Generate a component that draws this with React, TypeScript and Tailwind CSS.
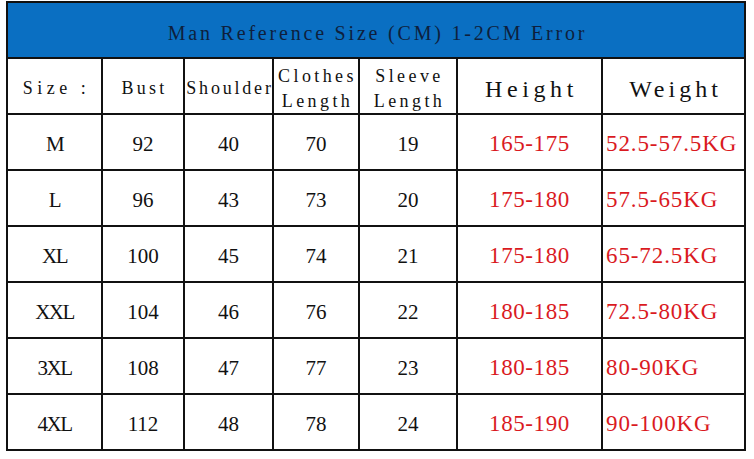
const rows = [
  { size: "M", bust: "92", shoulder: "40", length: "70", sleeve: "19", height: "165-175", weight: "52.5-57.5KG" },
  { size: "L", bust: "96", shoulder: "43", length: "73", sleeve: "20", height: "175-180", weight: "57.5-65KG" },
  { size: "XL", bust: "100", shoulder: "45", length: "74", sleeve: "21", height: "175-180", weight: "65-72.5KG" },
  { size: "XXL", bust: "104", shoulder: "46", length: "76", sleeve: "22", height: "180-185", weight: "72.5-80KG" },
  { size: "3XL", bust: "108", shoulder: "47", length: "77", sleeve: "23", height: "180-185", weight: "80-90KG" },
  { size: "4XL", bust: "112", shoulder: "48", length: "78", sleeve: "24", height: "185-190", weight: "90-100KG" },
]

const head = "flex items-center justify-center bg-white pt-[5px] text-[18px]"

const App = () => {
  return (
    <div className="w-[754px] h-[459px] bg-white pt-[1px] pl-[6px] [font-family:'Liberation_Serif',serif]">
      <div className="grid w-[740px] grid-cols-[93px_80px_87px_84px_96px_143px_141px] auto-rows-[54px] gap-[2px] bg-[#111] p-[2px] text-[#111]">
        {/* Title band */}
        <div className="col-span-7 flex items-center justify-center bg-[#0a6fc2] pt-[5px] pl-[3px] text-[20px] tracking-[2.8px] text-[#0e1f3d]">
          Man Reference Size (CM) 1-2CM Error
        </div>

        {/* Header row */}
        <div className={`${head} tracking-[4.5px] pl-[4px]`}>Size :</div>
        <div className={`${head} tracking-[3.3px] pl-[3px]`}>Bust</div>
        <div className={`${head} tracking-[2.8px] pl-[3px]`}>Shoulder</div>
        <div className={`${head} flex-col tracking-[3.4px] pl-[3px] leading-[25px]`}>
          <span>Clothes</span>
          <span>Length</span>
        </div>
        <div className={`${head} flex-col tracking-[3.4px] pl-[3px] leading-[25px]`}>
          <span>Sleeve</span>
          <span>Length</span>
        </div>
        <div className="flex items-center justify-center bg-white pt-[5px] pl-[4px] text-[24px] tracking-[4.6px]">
          Height
        </div>
        <div className="flex items-center justify-center bg-white pt-[5px] pl-[4px] text-[24px] tracking-[4px]">
          Weight
        </div>

        {/* Data rows */}
        {rows.map((r) => (
          <div key={r.size} className="contents">
            <div className="flex items-center justify-center bg-white pt-[5px] text-[21px] tracking-[-1.5px]">
              {r.size}
            </div>
            <div className="flex items-center justify-center bg-white pt-[5px] text-[21px]">{r.bust}</div>
            <div className="flex items-center justify-center bg-white pt-[5px] text-[21px]">{r.shoulder}</div>
            <div className="flex items-center justify-center bg-white pt-[5px] text-[21px]">{r.length}</div>
            <div className="flex items-center justify-center bg-white pt-[5px] text-[21px]">{r.sleeve}</div>
            <div className="flex items-center justify-center bg-white pt-[5px] text-[23px] tracking-[0.6px] text-[#da1a1f]">
              {r.height}
            </div>
            <div className="flex items-center bg-white pt-[5px] pl-[3px] text-[23px] tracking-[0.9px] text-[#da1a1f]">
              {r.weight}
            </div>
          </div>
        ))}
      </div>
    </div>
  )
}

export default App
